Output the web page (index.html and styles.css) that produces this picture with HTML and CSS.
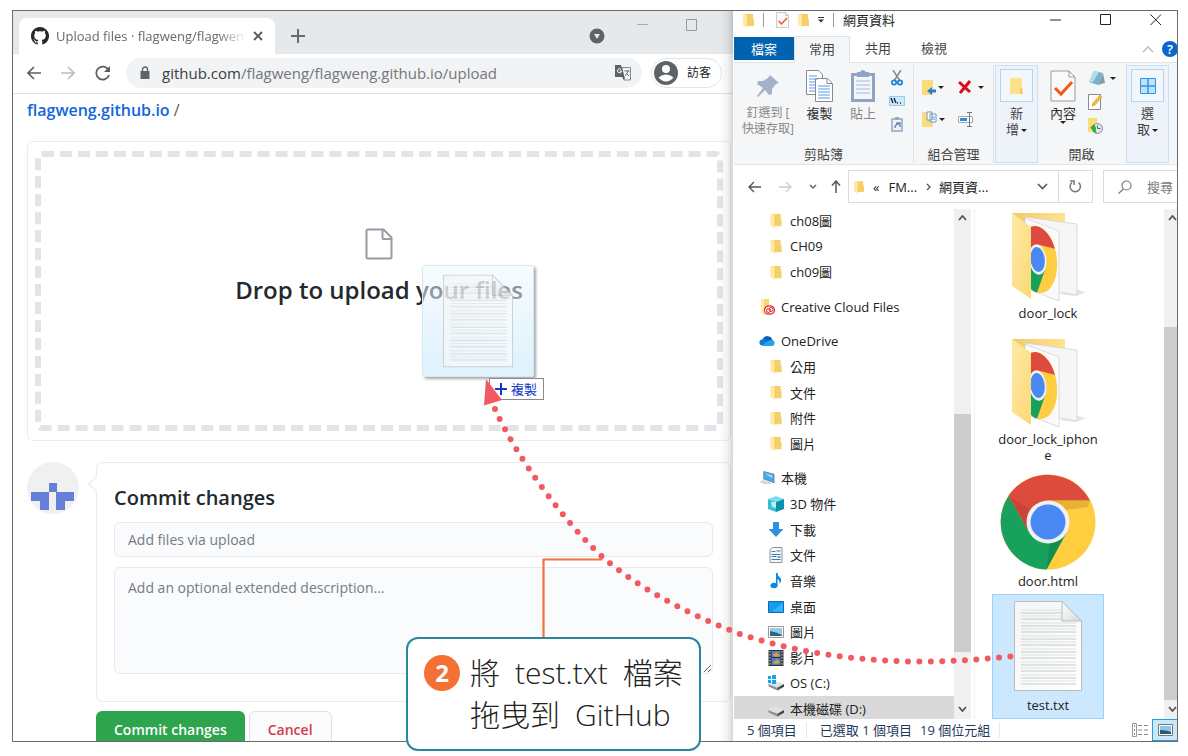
FILE: index.html
```html
<!DOCTYPE html>
<html lang="zh-Hant">
<head>
<meta charset="utf-8">
<title>Upload files · flagweng/flagweng.github.io</title>
<link rel="stylesheet" href="styles.css">
</head>
<body>
<svg class="defs" aria-hidden="true">
  <defs>
    <linearGradient id="gFold" x1="0" y1="0" x2="1" y2="1"><stop offset="0" stop-color="#ffe9a8"/><stop offset="1" stop-color="#fbd974"/></linearGradient>
    <linearGradient id="gBack" x1="0" y1="0" x2="1" y2="0"><stop offset="0" stop-color="#efcb6a"/><stop offset="1" stop-color="#ffe392"/></linearGradient>
    <linearGradient id="gPage" x1="0" y1="0" x2="1" y2="1"><stop offset="0" stop-color="#f3f5f6"/><stop offset="1" stop-color="#ffffff"/></linearGradient>
    <linearGradient id="gCurl" x1="0" y1="0" x2="1" y2="1"><stop offset="0" stop-color="#ffffff"/><stop offset="1" stop-color="#d5d9da"/></linearGradient>
    <clipPath id="halfChrome"><path d="M18 0H60V110L18 88Z"/></clipPath>
    <pattern id="rules" width="56" height="13" patternUnits="userSpaceOnUse" patternTransform="translate(0 8)"><path d="M0 1h56M0 7h56" stroke="#dfe1e2"/><path d="M0 4h56M0 10h56" stroke="#c6c9cb"/></pattern>
    <symbol id="folder" viewBox="0 0 12 16"><path d="M2 1h9v5l1 1v7H2z" fill="#f6cf68"/><path d="M0 1h2l3 2v12.500L4 15.500 0 13z" fill="#ffe9a3"/><path d="M5 3v11" stroke="#e8bf56" stroke-width=".6"/></symbol>
    <symbol id="chrome" viewBox="0 0 96 96">
      <circle cx="48" cy="48" r="47.500" fill="#ffcd40"/>
      <path d="M48 48 8.500 21.600A47.500 47.500 0 0 1 90 26.500H48z" fill="#dd4b3e"/>
      <path d="M8.500 22 29.400 58.800 48 48 48 26.500z" fill="#dd4b3e"/>
      <path d="M8.500 22A47.500 47.500 0 0 0 46.500 95.500L66.600 58.800 29.400 58.800z" fill="#18a05d"/>
      <path d="M8.500 22 29.400 58.800 31 36z" fill="#b83a31" opacity=".45"/>
      <path d="M48 26.500H90L88 33 66 36z" fill="#d9a12f" opacity=".6"/>
      <path d="M66 59 46.500 95.500 50 69z" fill="#0f7a45" opacity=".5"/>
      <circle cx="48" cy="48" r="21.500" fill="#f1f1f1"/><circle cx="48" cy="48" r="17.500" fill="#4a89f4"/>
    </symbol>
    <symbol id="bigfolder" viewBox="0 0 76 96">
      <path d="M60 82 76 86 66 90 50 88z" fill="#e4e4e4"/>
      <path d="M2 7h53v50H2z" fill="url(#gBack)"/>
      <path d="M15 11 67 18v71L15 80z" fill="#f6f6f6" stroke="#cfcfcf" stroke-width=".7"/>
      <path d="M15 12 49 25v70L15 82z" fill="#fafafa" stroke="#cfcfcf" stroke-width=".7"/>
      <g clip-path="url(#halfChrome)"><g transform="translate(8 15) skewY(14) scale(.41 .7)">
        <circle cx="48" cy="48" r="47.500" fill="#ffcd40"/>
        <path d="M48 48 8.500 21.600A47.500 47.500 0 0 1 90 26.500H48z" fill="#dd4b3e"/>
        <path d="M8.500 22A47.500 47.500 0 0 0 46.500 95.500L66.600 58.800 29.400 58.800z" fill="#18a05d"/>
        <circle cx="48" cy="48" r="21.500" fill="#f1f1f1"/><circle cx="48" cy="48" r="17.500" fill="#4a89f4"/>
      </g></g>
      <path d="M2 7 21 21v72L2 80z" fill="url(#gFold)"/>
    </symbol>
    <symbol id="document" viewBox="0 0 68 90">
      <path d="M.5.500H48L67.500 20V89.500H.5z" fill="url(#gPage)" stroke="#b9bdbf"/>
      <path d="M7 8h41v76H7zM48 21h14v63H48z" fill="url(#rules)"/>
      <path d="M48 .5V20H67.500z" fill="url(#gCurl)" stroke="#b9bdbf"/>
    </symbol>
    <symbol id="check" viewBox="0 0 26 32"><path d="M1 1h18l6 6v24H1z" fill="#fafafa" stroke="#9a9a9a"/><path d="M19 1v6h6" fill="none" stroke="#9a9a9a"/><path d="m5 18 6 6L22 12" fill="none" stroke="#f15a1d" stroke-width="3"/></symbol>
    <symbol id="drive" viewBox="0 0 17 16"><path d="M0 9 7 6l10 3-7 4z" fill="#dfe1e3"/><path d="M0 9l10 4v3L1 12z" fill="#8f9397"/><path d="M10 13l7-4v3l-7 4z" fill="#3f4346"/><path d="M12 13.500h1" stroke="#4ee04e"/></symbol>
  </defs>
</svg>

<main class="frame">
  <section class="browser">
    <div class="tabstrip">
      <div class="tab">
        <svg width="18" height="18" viewBox="0 0 16 16"><path fill="#24292e" d="M8 0C3.580 0 0 3.580 0 8c0 3.540 2.290 6.530 5.470 7.590.4.070.55-.17.55-.38 0-.19-.01-.82-.01-1.490-2.010.37-2.530-.49-2.690-.94-.09-.23-.48-.94-.82-1.130-.28-.15-.68-.52-.01-.53.630-.01 1.080.58 1.230.82.720 1.210 1.870.87 2.330.66.070-.52.280-.87.510-1.070-1.780-.2-3.640-.89-3.640-3.950 0-.87.310-1.590.820-2.150-.08-.2-.36-1.020.08-2.120 0 0 .67-.21 2.200.82.640-.18 1.320-.27 2-.27s1.360.09 2 .27c1.530-1.040 2.200-.82 2.200-.82.440 1.100.160 1.920.08 2.120.510.56.820 1.270.820 2.150 0 3.070-1.870 3.750-3.650 3.950.290.250.540.730.540 1.480 0 1.070-.01 1.930-.01 2.200 0 .21.150.46.550.38A8 8 0 0 0 8 0"/></svg>
        <span class="tab-title">Upload files · flagweng/flagwen</span>
        <button class="bare" aria-label="Close tab"><svg width="10" height="10" viewBox="0 0 10 10"><path d="m1 1 8 8M9 1 1 9" stroke="#55585c" stroke-width="1.800"/></svg></button>
      </div>
      <button class="bare newtab" aria-label="New tab"><svg width="14" height="14" viewBox="0 0 14 14"><path d="M7 0v14M0 7h14" stroke="#66696d" stroke-width="2"/></svg></button>
      <span class="grow"></span>
      <button class="bare tabsearch" aria-label="Search tabs"><svg width="16" height="16" viewBox="0 0 16 16"><circle cx="8" cy="8" r="7.500" fill="#5f6368"/><path d="M5 6h6l-3 5z" fill="#e6e9ec"/></svg></button>
      <div class="wincontrols">
        <svg width="12" height="12" viewBox="0 0 12 12"><path d="M0 5.500h11" stroke="#aaadb0"/></svg>
        <svg width="12" height="12" viewBox="0 0 12 12"><path d="M.5.500h10v11H.5z" fill="none" stroke="#97999c"/></svg>
      </div>
    </div>
    <div class="toolbar">
      <button class="bare" aria-label="Back"><svg width="14" height="14" viewBox="0 0 14 14"><path d="M14 7H1M7 1 1 7l6 6" fill="none" stroke="#5b5e63" stroke-width="1.600"/></svg></button>
      <button class="bare" aria-label="Forward"><svg width="14" height="14" viewBox="0 0 14 14"><path d="M0 7h13M7 1l6 6-6 6" fill="none" stroke="#bbbdc0" stroke-width="1.600"/></svg></button>
      <button class="bare" aria-label="Reload"><svg width="16" height="16" viewBox="0 0 16 16"><path d="M13.500 5A6.500 6.500 0 1 0 14 10" fill="none" stroke="#5b5e63" stroke-width="1.800"/><path d="M15 1v6H9z" fill="#5b5e63"/></svg></button>
      <div class="urlbar">
        <svg width="10" height="13" viewBox="0 0 10 13"><path d="M.5 5h9v8h-9z" fill="#5f6368"/><path d="M2.500 5V3.500a2.500 2.500 0 0 1 5 0V5" fill="none" stroke="#5f6368" stroke-width="1.400"/></svg>
        <span class="url"><b>github.com</b>/flagweng/flagweng.github.io/upload</span>
        <svg width="16" height="16" viewBox="0 0 16 16"><path d="M7 2.500h8.500v12.500H9z" fill="#f1f3f4" stroke="#85888c"/><path d="M0 0h6l3.500 12H0z" fill="#5f6368"/><path d="M7 12h3l-1 3z" fill="#5f6368"/><path d="M6 4.500A2 2 0 1 0 6.500 6H4.500" fill="none" stroke="#fff"/><path d="M9.500 6h5M12 5v1m1.500 0L10 11m1-3 3 3" fill="none" stroke="#75787c"/></svg>
      </div>
      <button class="profile"><svg width="24" height="24" viewBox="0 0 24 24"><circle cx="12" cy="12" r="12" fill="#5f6368"/><circle cx="12" cy="8" r="4" fill="#fff"/><path d="M4.500 16.500Q8 13.500 12 13.500t7.500 3Q16 20.500 12 20.500t-7.500-4z" fill="#fff"/></svg>訪客</button>
    </div>
    <div class="page">
      <nav class="crumbs"><a href="#">flagweng.github.io</a> /</nav>
      <div class="dropcard">
        <div class="dropzone">
          <svg width="28" height="32" viewBox="0 0 28 32"><path d="M3 1.500h15.500l8 8V29q0 1.500-1.500 1.500H3q-1.500 0-1.500-1.500V3q0-1.500 1.500-1.500zM17.500 2v8q0 1 1 1h8" fill="none" stroke="#959da5" stroke-width="2"/></svg>
          <h1>Drop to upload your files</h1>
        </div>
      </div>
      <form class="commit">
        <svg class="avatar" width="52" height="52" viewBox="0 0 52 52"><circle cx="26" cy="26" r="26" fill="#f0f0f0"/><path d="M22 21h8v9h17v9h-9v9h-9V30h-7v18h-9v-9H4v-9h18z" fill="#6680d9"/></svg>
        <div class="commit-main">
          <div class="commit-box">
            <svg class="pointer" width="9" height="16" viewBox="0 0 9 16"><path d="M9 0 1 8l8 8" fill="#fff" stroke="#eaecef" stroke-width="1.400"/></svg>
            <h2>Commit changes</h2>
            <input type="text" aria-label="Commit summary" placeholder="Add files via upload">
            <textarea aria-label="Extended description" placeholder="Add an optional extended description..."></textarea>
          </div>
          <div class="actions">
            <button type="button" class="primary">Commit changes</button>
            <button type="button" class="cancel">Cancel</button>
          </div>
        </div>
      </form>
    </div>
  </section>

  <section class="explorer">
    <header class="titlebar">
      <svg width="11" height="15"><use href="#folder"/></svg>
      <i class="bar"></i>
      <svg class="push" width="13" height="16"><use href="#check"/></svg>
      <svg width="11" height="15"><use href="#folder"/></svg>
      <svg width="6" height="6" viewBox="0 0 6 6"><path d="M0 .5h6" stroke="#333"/><path d="M0 2.500h6l-3 3z" fill="#333"/></svg>
      <i class="bar"></i>
      <span class="grow">網頁資料</span>
      <span class="caption">
        <svg width="12" height="12" viewBox="0 0 12 12"><path d="M0 6h11" stroke="#222"/></svg>
        <svg width="12" height="12" viewBox="0 0 12 12"><path d="M.5.500h10v10H.5z" fill="none" stroke="#222"/></svg>
        <svg width="12" height="12" viewBox="0 0 12 12"><path d="m.5.500 10.500 10.500M11 .5.500 11" stroke="#222"/></svg>
      </span>
    </header>
    <nav class="tabs">
      <button class="file">檔案</button><button class="active">常用</button><button>共用</button><button>檢視</button>
      <span class="grow"></span>
      <svg width="12" height="7" viewBox="0 0 12 7"><path d="m1 6 5-5 5 5" fill="none" stroke="#b5b5b5" stroke-width="1.400"/></svg>
      <span class="help">?</span>
    </nav>
    <div class="ribbon">
      <div class="group clip">
        <div class="tools">
          <div class="big dim pin"><svg width="24" height="32" viewBox="0 0 24 32"><path d="m14 5 9 8-3 1-4 5 0 5-3 1-4-5-7 7-1-1 6-8-6-4 1-3 5 0 5-3z" fill="#a3b2c8"/></svg><span>釘選到 [<br>快速存取]</span></div>
          <div class="big"><svg width="27" height="32" viewBox="0 0 27 32"><g fill="#fff" stroke="#8b8b8b"><path d="M.5.500h12l4 4v20H.5z"/><path d="M9.500 8.500h12l5 5v18h-17z"/><path d="M21 8.500v5h5"/></g><path d="M3 6h8M3 9h9M3 12h6M3 15h6M3 18h6M3 21h6M12 16h12M12 19h12M12 22h12M12 25h12M12 28h12" stroke="#5b9bea"/></svg><span>複製</span></div>
          <div class="big dim"><svg width="24" height="32" viewBox="0 0 24 32"><path d="M1.500 4.500h21v26h-21z" fill="#f2f6fb" stroke="#8fa3c2" stroke-width="3"/><path d="M6 2h3q3-4 6 0h3v5H6z" fill="#8fa3c2"/><path d="M5 11h14M5 15h14M5 19h14M5 23h14" stroke="#cbd8ea" stroke-width="2"/></svg><span>貼上</span></div>
          <div class="stack">
            <svg width="12" height="16" viewBox="0 0 12 16"><path d="M2 0 9 11M10 0 3 11" stroke="#888" stroke-width="1.500"/><circle cx="3" cy="12.500" r="2.200" fill="none" stroke="#1683d8" stroke-width="1.700"/><circle cx="9" cy="12.500" r="2.200" fill="none" stroke="#1683d8" stroke-width="1.700"/></svg>
            <svg width="16" height="10" viewBox="0 0 16 10"><path d="M.5.500h15v9H.5z" fill="#cfe9fb" stroke="#92cdf4"/><path d="m2 2 2 5M5 2l2 5M8 7h1M11 7h1" stroke="#223" stroke-width="1.400"/></svg>
            <svg width="12" height="16" viewBox="0 0 12 16"><path d="M1 3h10v12H1z" fill="#eef3f9" stroke="#94a7c4" stroke-width="1.500"/><path d="M4 1h4v3H4z" fill="#94a7c4"/><path d="M4 12q0-4 4-4M5 7h4v4" fill="none" stroke="#7389ad" stroke-width="1.500"/></svg>
          </div>
        </div>
        <div class="gname">剪貼簿</div>
      </div>
      <div class="group org">
        <div class="quad">
          <span><svg width="14" height="17" viewBox="0 0 14 17"><path d="M0 1h11v15H0z" fill="#fbdc7c"/><path d="m5 12 5-4v2.500h4v3h-4V16z" fill="#1f83d6"/></svg><i class="dd"></i></span>
          <span><svg width="14" height="14" viewBox="0 0 14 14"><path d="m1 2 11 10M12 1 2 13" stroke="#dc0a1c" stroke-width="3"/></svg><i class="dd"></i></span>
          <span><svg width="15" height="17" viewBox="0 0 15 17"><path d="M0 1h11v15H0z" fill="#fbdc7c"/><path d="M5 1h5v8H5zM8 3h6v8H8z" fill="#fff" stroke="#7b94b8"/><path d="M10 6h3M10 8h3" stroke="#5b9bea"/></svg><i class="dd"></i></span>
          <span><svg width="15" height="15" viewBox="0 0 15 15"><path d="M.5 4.500h14v6H.5z" fill="#fff" stroke="#aaa"/><path d="M2 6h7v3H2z" fill="#2a8ce8"/><path d="M9 .5h5M11.500.500v14M9 14.500h5" stroke="#777"/></svg></span>
        </div>
        <div class="gname">組合管理</div>
      </div>
      <button class="group tall"><i class="tile"><svg width="13" height="16" viewBox="0 0 13 16"><path d="M0 0h12v11l1 1v4H0z" fill="#fde08a"/><path d="M10 10h2v6h-2z" fill="#f3c95e"/></svg></i><span>新<br>增<i class="dd"></i></span></button>
      <div class="group open">
        <div class="tools">
          <div class="big"><svg width="26" height="32"><use href="#check"/></svg><span>內容</span><i class="dd"></i></div>
          <div class="stack">
            <span><svg width="18" height="16" viewBox="0 0 18 16"><path d="m6 1 9 2-5 12-9-3z" fill="#6fb6cf"/><path d="m6 1 5 1-6 10-4 0z" fill="#b5dbe8"/><path d="m15 3 2 10-4 1-3 1z" fill="#8c9ba2"/></svg><i class="dd"></i></span>
            <svg width="15" height="16" viewBox="0 0 15 16"><path d="M.5.500h12v15H.5z" fill="#fff" stroke="#888"/><path d="m4 12 1-3 7-8 2 2-7 8z" fill="#f3b941" stroke="#c98a1e" stroke-width=".5"/></svg>
            <svg width="15" height="16" viewBox="0 0 15 16"><path d="M0 0h9v14H0z" fill="#fbdc7c"/><circle cx="9.500" cy="10.500" r="5" fill="#dfe6e6" stroke="#849090"/><path d="M9.500 7.500v3h3" fill="none" stroke="#666"/><path d="m2 10 4-4 2 4q-1 3 1 5-4 0-5-4z" fill="#2dae43"/></svg>
          </div>
        </div>
        <div class="gname">開啟</div>
      </div>
      <button class="group tall"><i class="tile"><svg width="16" height="16" viewBox="0 0 16 16"><path d="M.5.500h15v15H.5z" fill="#bfe1fb" stroke="#2f97ea"/><path d="M8 0v16M0 8h16" stroke="#2f97ea" stroke-width="1.500"/></svg></i><span>選<br>取<i class="dd"></i></span></button>
    </div>
    <div class="address">
      <svg width="13" height="12" viewBox="0 0 13 12"><path d="M13 6H1M6 1 1 6l5 5" fill="none" stroke="#555" stroke-width="1.400"/></svg>
      <svg width="13" height="12" viewBox="0 0 13 12"><path d="M0 6h12M7 1l5 5-5 5" fill="none" stroke="#ccc" stroke-width="1.400"/></svg>
      <svg width="8" height="6" viewBox="0 0 8 6"><path d="m1 1 3 3 3-3" fill="none" stroke="#666" stroke-width="1.500"/></svg>
      <svg width="10" height="13" viewBox="0 0 10 13"><path d="M5 13V1M1 5.500 5 1l4 4.500" fill="none" stroke="#555" stroke-width="1.500"/></svg>
      <div class="path">
        <svg width="10" height="14"><use href="#folder"/></svg>
        <span class="chev">«</span><span>FM...</span>
        <svg width="6" height="8" viewBox="0 0 6 8"><path d="m1 1 3 3-3 3" fill="none" stroke="#555" stroke-width="1.300"/></svg>
        <span class="grow">網頁資...</span>
        <svg width="11" height="7" viewBox="0 0 11 7"><path d="m1 1 4.500 4.500L10 1" fill="none" stroke="#555" stroke-width="1.600"/></svg>
        <i class="refresh"><svg width="13" height="13" viewBox="0 0 13 13"><path d="M9.500 2.500A5.200 5.200 0 1 1 3 2.500" fill="none" stroke="#777" stroke-width="1.500"/><path d="M1 1h4v4" fill="none" stroke="#777" stroke-width="1.500"/></svg></i>
      </div>
      <label class="search"><svg width="14" height="14" viewBox="0 0 14 14"><circle cx="8.500" cy="5.500" r="4.500" fill="none" stroke="#777" stroke-width="1.200"/><path d="M5.500 9 .5 13.500" stroke="#777" stroke-width="1.200"/></svg><input type="text" aria-label="搜尋" placeholder="搜尋 網頁資料"></label>
    </div>
    <div class="panes">
      <ul class="tree">
        <li><svg width="11" height="15"><use href="#folder"/></svg>ch08圖</li>
        <li><svg width="11" height="15"><use href="#folder"/></svg>CH09</li>
        <li><svg width="11" height="15"><use href="#folder"/></svg>ch09圖</li>
        <li class="root"><svg width="16" height="16" viewBox="0 0 16 16"><path d="M3 0h7v15l-4 1-3-2z" fill="#f8d577"/><path d="M2 0h3v15l-3-1z" fill="#ffe9a3"/><ellipse cx="10.500" cy="11" rx="5" ry="4.200" fill="#fff" stroke="#e3262d" stroke-width="1.200"/><circle cx="9.500" cy="11.500" r="2" fill="none" stroke="#e3262d"/><circle cx="12" cy="10.500" r="2" fill="none" stroke="#e3262d"/></svg>Creative Cloud Files</li>
        <li class="root"><svg width="18" height="12" viewBox="0 0 18 12"><path d="M4 4Q7-1 11 1q3 0 4 4l-8 4z" fill="#0a5fb5"/><path d="M1 10q-2-5 3-6 3-1 5 2l4 5H4q-2 0-3-1z" fill="#0f78d4"/><path d="M3 11 11 5.500q2-1 4-.5 3 1 2.500 4-.5 2.500-3 2.500H4z" fill="#28a2ea"/></svg>OneDrive</li>
        <li><svg width="11" height="15"><use href="#folder"/></svg>公用</li>
        <li><svg width="11" height="15"><use href="#folder"/></svg>文件</li>
        <li><svg width="11" height="15"><use href="#folder"/></svg>附件</li>
        <li><svg width="11" height="15"><use href="#folder"/></svg>圖片</li>
        <li class="root"><svg width="17" height="15" viewBox="0 0 17 15"><path d="M5 0 16 3v9L5 8z" fill="#4aa9ea" stroke="#4d6f8a" stroke-width=".7"/><path d="m6 2 8 2v3z" fill="#a8dbfb"/><path d="m0 11 5-2 6 3-4 2z" fill="#d2d6da"/><path d="m10 12 2 1" stroke="#888"/></svg>本機</li>
        <li><svg width="16" height="16" viewBox="0 0 16 16"><path d="m0 3 8-3 8 3-8 3z" fill="#83dde8"/><path d="m0 3 8 3v10l-8-3z" fill="#35bdd4"/><path d="m16 3-8 3v10l8-3z" fill="#0a93ae"/><path d="m3 6 5 0v6l-4-1z" fill="#b8eef4"/></svg>3D 物件</li>
        <li><svg width="15" height="15" viewBox="0 0 15 15"><path d="M4.500 0h6v7H15l-7.500 8L0 7h4.500z" fill="#2f8fe2"/></svg>下載</li>
        <li><svg width="13" height="16" viewBox="0 0 13 16"><path d="M.5 2.500 3 .5h9.500v15H.5z" fill="#f5f7f8" stroke="#8d9499"/><path d="M2 4.500h4M2 7.500h9M2 9.500h5M2 12.500h9M7 4h4" stroke="#3c7fa8"/><path d="M8 9h3v2H8z" fill="#68aad4"/></svg>文件</li>
        <li><svg width="11" height="16" viewBox="0 0 11 16"><ellipse cx="3.500" cy="12.500" rx="3.500" ry="2.700" fill="#0c86de"/><path d="M5.500 0H7q0 3 3 5 1.500 3-1 6 .5-4-2-5v7H5.500z" fill="#0c86de"/></svg>音樂</li>
        <li><svg width="16" height="12" viewBox="0 0 16 12"><path d="M.5.500h15v11H.5z" fill="#149bf2" stroke="#0a6cb4"/><path d="M15 2v8.500H4z" fill="#36b2fb"/></svg>桌面</li>
        <li><svg width="16" height="12" viewBox="0 0 16 12"><path d="M.5.500h15v11H.5z" fill="#fff" stroke="#999"/><path d="M2 2h12v8H2z" fill="#96c8ee"/><path d="M2 5q6 1 12 4v1H2z" fill="#2a6674"/></svg>圖片</li>
        <li><svg width="15" height="16" viewBox="0 0 15 16"><path d="M0 0h15v16H0z" fill="#333"/><path d="M3 1h9v6H3zM3 8h9v7H3z" fill="#4280cf"/><path d="m4 5 4-3 4 4-5 1zM4 13l5-4 3 4-5 1z" fill="#e29a34"/><path d="M1.500 1v14M13.500 1v14" stroke="#ddd" stroke-dasharray="1.500 1.500"/></svg>影片</li>
        <li><svg width="17" height="16"><use href="#drive"/><path d="M0 1h3v3H0zM4 0h4v4H4zM0 5h3v3H0zM4 5h4v4H4z" fill="#10a7ec"/></svg>OS (C:)</li>
        <li class="current"><svg width="17" height="16"><use href="#drive"/></svg>本機磁碟 (D:)</li>
      </ul>
      <div class="scroll treebar"><svg width="9" height="6" viewBox="0 0 9 6"><path d="m1 5 3.500-4L8 5" fill="none" stroke="#555" stroke-width="1.800"/></svg><div class="rail"><i></i></div><svg width="9" height="6" viewBox="0 0 9 6"><path d="m1 1 3.500 4L8 1" fill="none" stroke="#555" stroke-width="1.800"/></svg></div>
      <div class="files">
        <figure><svg width="76" height="96"><use href="#bigfolder"/></svg><figcaption>door_lock</figcaption></figure>
        <figure><svg width="76" height="96"><use href="#bigfolder"/></svg><figcaption>door_lock_iphon<br>e</figcaption></figure>
        <figure><svg width="96" height="96"><use href="#chrome"/></svg><figcaption>door.html</figcaption></figure>
        <figure class="selected"><svg width="96" height="96" viewBox="-14 -3 96 96"><use href="#document" width="68" height="90"/></svg><figcaption>test.txt</figcaption></figure>
      </div>
      <div class="scroll filebar"><svg width="9" height="6" viewBox="0 0 9 6"><path d="m1 5 3.500-4L8 5" fill="none" stroke="#555" stroke-width="1.800"/></svg><div class="rail"><i></i></div><svg width="9" height="6" viewBox="0 0 9 6"><path d="m1 1 3.500 4L8 1" fill="none" stroke="#555" stroke-width="1.800"/></svg></div>
    </div>
    <footer class="status">
      <span class="cell">5 個項目</span><span class="cell"><span>已選取 1 個項目</span><span>19 個位元組</span></span>
      <span class="grow"></span>
      <svg width="17" height="14" viewBox="0 0 17 14"><path d="M.5.500h4v13h-4z" fill="#fff" stroke="#999"/><path d="M2 3h1M2 7h1" stroke="#3a8a5a" stroke-width="1.500"/><path d="M2 11h1" stroke="#d33" stroke-width="1.500"/><path d="M6 2.500h4M12 2.500h4M6 7h4M12 7h4M6 11.500h4M12 11.500h4" stroke="#888"/></svg>
      <button class="thumbs" aria-label="大圖示"><svg width="15" height="12" viewBox="0 0 15 12"><path d="M.5.500h14v11H.5z" fill="#fff" stroke="#777"/><path d="M2 2h11v8H2z" fill="#8fc4f2"/><path d="M2 6q6 0 11 2v2H2z" fill="#235d6e"/></svg></button>
    </footer>
  </section>
</main>

<div class="ghost"><svg width="70" height="94"><use href="#document"/></svg></div>
<div class="droptip"><svg width="12" height="12" viewBox="0 0 12 12"><path d="M6 0v12M0 6h12" stroke="#1237c8" stroke-width="2"/></svg>複製</div>
<svg class="trail" viewBox="0 0 1188 756" preserveAspectRatio="none" aria-hidden="true">
  <path d="M602.500 559.500H543.500V640" fill="none" stroke="#f4733a" stroke-width="2.200"/>
  <path d="M495 409C515 455 565 523 601.500 556C637 588 692 616 740 634C798 653 860 661.500 920 661.500C952 661.500 983 659.500 1014 656" fill="none" stroke="#f15a5f" stroke-width="6" stroke-linecap="round" stroke-dasharray="0 11.400"/>
  <path d="M486 379 502 400 484 405.500z" fill="#f15a5f"/>
</svg>
<aside class="callout"><span class="step">2</span><p>將&ensp;test.txt&ensp;檔案<br>拖曳到&ensp;GitHub</p></aside>
</body>
</html>
```
FILE: styles.css
```css
* { box-sizing: border-box; }
body {
  margin: 0;
  height: 100vh;
  display: flex;
  padding: 10px 10px 14px 12px;
  position: relative;
  overflow: hidden;
  background: #fff;
  color: #222;
  font: 13px/16px "Open Sans", "Noto Sans CJK TC", sans-serif;
}
button, input, textarea { font: inherit; color: inherit; margin: 0; }
button { border: 0; padding: 0; background: none; }
svg { display: block; flex: none; }
i { font-style: normal; }
h1, h2, p, ul, figure { margin: 0; padding: 0; }
.defs { position: absolute; width: 0; height: 0; }
.grow { flex: 1; min-width: 0; white-space: nowrap; }
.frame {
  flex: 1;
  min-width: 0;
  display: grid;
  grid-template-columns: minmax(0, 60fr) minmax(0, 37fr);
  grid-template-rows: minmax(0, 1fr);
  border: 1px solid #6b6b6d;
  overflow: hidden;
}

/* Browser window */
.browser { display: flex; flex-direction: column; position: relative; overflow: hidden; }
.browser::after {
  content: "";
  position: absolute;
  inset: 0 0 0 auto;
  width: 14px;
  background: linear-gradient(90deg, rgba(0,0,0,0), rgba(0,0,0,.05) 60%, rgba(0,0,0,.16));
}
.tabstrip { flex: none; height: 43px; display: flex; padding: 7px 35px 0 6px; background: #e6e9ec; }
.tab {
  width: 256px;
  display: flex;
  align-items: center;
  gap: 7px;
  padding: 0 12px 0 12px;
  background: #fff;
  border-radius: 8px 8px 0 0;
}
.tab-title {
  flex: 1;
  min-width: 0;
  white-space: nowrap;
  color: #66696d;
  -webkit-mask-image: linear-gradient(90deg, #000 85%, transparent);
  mask-image: linear-gradient(90deg, #000 85%, transparent);
}
.newtab { padding: 0 16px; }
.tabsearch { padding-right: 32px; }
.wincontrols { display: flex; gap: 37px; height: 14px; align-items: center; }
.toolbar {
  flex: none;
  height: 40px;
  display: flex;
  align-items: center;
  gap: 20px;
  padding: 0 11px 2px 14px;
  border-bottom: 1px solid #dfe1e3;
}
.urlbar {
  flex: 1;
  height: 30px;
  margin-left: -5px;
  margin-right: -11px;
  display: flex;
  align-items: center;
  gap: 12px;
  padding: 0 11px 0 14px;
  border-radius: 15px;
  background: #f1f3f4;
}
.url { flex: 1; font-size: 15px; line-height: 20px; color: #74777b; }
.url b { font-weight: 400; color: #3a3d41; }
.profile {
  height: 30px;
  display: flex;
  align-items: center;
  gap: 9px;
  padding: 0 10px 0 2px;
  border: 1px solid #e2e4e6;
  border-radius: 15px;
  font-size: 12px;
}
.page { flex: 1; min-height: 0; padding: 6px 2px 0 14px; }
.crumbs { font-size: 16px; line-height: 20px; color: #586069; }
.crumbs a { color: #1166dc; font-weight: 600; text-decoration: none; }
.dropcard { margin-top: 21px; padding: 9px 7px; border: 1px solid #eaecef; border-radius: 6px; }
.dropzone {
  height: 280px;
  display: flex;
  flex-direction: column;
  align-items: center;
  gap: 14px;
  padding-top: 71px;
  border: 6px dashed #e1e4e8;
  border-radius: 7px;
}
.dropzone h1 { font-size: 24px; line-height: 32px; font-weight: 600; color: #24292e; }
.commit { display: flex; gap: 17px; margin-top: 21px; }
.commit-main { flex: 1; min-width: 0; }
.commit-box {
  position: relative;
  display: flex;
  flex-direction: column;
  padding: 20px 17px 27px;
  border: 1px solid #eaecef;
  border-radius: 6px;
}
.pointer { position: absolute; left: -9px; top: 13px; }
.commit-box h2 { font-size: 20px; line-height: 30px; font-weight: 600; color: #24292e; }
.commit-box input, .commit-box textarea {
  width: 100%;
  border: 1px solid #e6e9ec;
  border-radius: 6px;
  background: #fafbfc;
  padding: 0 13px;
  font-size: 14px;
  line-height: 20px;
}
.commit-box input { height: 35px; margin: 9px 0 10px; }
.commit-box textarea { height: 107px; padding: 10px 13px; }
.commit-box ::placeholder { color: #757c84; opacity: 1; }
.actions { display: flex; gap: 4px; margin-top: 9px; }
.actions button { height: 37px; padding: 0 18px; border-radius: 6px; font-size: 14px; font-weight: 600; }
.actions .primary { background: #2ea44f; color: #fff; }
.actions .cancel { background: #fafbfc; border: 1px solid #dfe1e4; color: #d73a49; }

/* File explorer window */
.explorer { display: flex; flex-direction: column; padding-left: 1px; overflow: hidden; background: #fff; }
.titlebar { flex: none; height: 25px; display: flex; align-items: center; gap: 9px; padding: 0 15px 7px 9px; }
.titlebar .push { margin-left: 3px; }
.bar { width: 1px; height: 14px; background: #999; }
.caption { display: flex; gap: 38px; }
.tabs { flex: none; height: 27px; display: flex; align-items: center; border-bottom: 1px solid #e3e4e6; color: #444; }
.tabs button { align-self: stretch; padding: 0 14px 2px; }
.tabs button:nth-child(3), .tabs button:nth-child(4) { padding: 0 15px 2px; }
.tabs .file { padding: 0 17px; margin: 1px 0 2px 0; background: #0063b1; color: #fff; }
.tabs .active { background: #f5f6f7; border: 1px solid #dfe1e4; border-bottom: 0; margin-bottom: -1px; }
.help {
  width: 16px; height: 16px; margin: 0 -1px 0 8px;
  border-radius: 8px; background: #0a66c8; color: #fff; text-align: center; font-weight: 600;
}
.ribbon {
  flex: none;
  height: 102px;
  display: flex;
  padding: 2px 0 1px;
  background: #f5f6f7;
  border-bottom: 1px solid #e3e4e6;
}
.group { flex: none; display: flex; flex-direction: column; color: #444; }
.gname { margin-top: auto; line-height: 18px; text-align: center; }
.tools { display: flex; }
.big { display: flex; flex-direction: column; align-items: center; gap: 3px; padding-top: 5px; text-align: center; color: #333; white-space: nowrap; }
.big.dim { color: #888; }
.clip { width: 180px; border-right: 1px solid #e1e3e5; }
.clip .tools { padding-left: 8px; gap: 17px; }
.clip .pin { margin-right: -5px; font-size: 12px; }
.stack { display: flex; flex-direction: column; align-items: flex-start; gap: 8px; padding-top: 5px; }
.clip .stack { align-items: center; gap: 10px; margin-left: -4px; }
.org { width: 80px; border-right: 1px solid #e1e3e5; }
.quad { display: grid; grid-template-columns: 36px 36px; grid-auto-rows: 32px; padding: 6px 0 0 8px; }
.quad span, .stack span { display: flex; align-items: center; gap: 4px; }
.quad span:nth-child(odd) { gap: 0; }
.dd { display: inline-block; border: 3px solid transparent; border-top-color: #222; border-bottom: 0; margin-left: 2px; vertical-align: middle; }
.stack .dd { margin: 0; }
.big .dd { margin: -3px 0 0; }
.tall {
  width: 43px;
  margin: 0 0 0 1px;
  align-items: center;
  gap: 3px;
  padding-top: 3px;
  background: #edf3f9;
  border: 1px solid #c9e0f5;
  text-align: center;
}
.tile { width: 33px; height: 33px; display: grid; place-items: center; border: 1px solid #b0d5f5; background: #f2f7fc; }
.open { width: 87px; }
.open .tools { padding-left: 12px; gap: 12px; }
.address { flex: none; height: 44px; display: flex; align-items: center; padding: 0 0 1px 14px; gap: 18px; }
.address > svg:nth-child(3) { margin: 0 -4px 0 -1px; }
.path {
  flex: none;
  width: 245px;
  height: 33px;
  margin-left: -11px;
  display: flex;
  align-items: center;
  gap: 9px;
  padding-left: 5px;
  border: 1px solid #dcdcdc;
}
.path .grow { margin-left: -2px; }
.refresh { width: 34px; align-self: stretch; display: grid; place-items: center; border-left: 1px solid #dcdcdc; margin-left: 1px; }
.search { flex: 1; min-width: 0; height: 33px; margin-left: -8px; display: flex; align-items: center; gap: 15px; padding-left: 14px; border: 1px solid #dcdcdc; border-right: 0; }
.search input { flex: 1; min-width: 0; width: 0; border: 0; padding: 0; background: none; }
.search ::placeholder { color: #777; opacity: 1; }
.panes { flex: 1; min-height: 0; display: flex; overflow: hidden; }
.tree { flex: 1; min-width: 0; list-style: none; display: flex; flex-direction: column; margin: -1px 0 -3px; }
.tree li { flex: 1; min-height: 0; display: flex; align-items: center; gap: 6px; padding-left: 34px; white-space: nowrap; }
.tree li svg { width: 16px; }
.tree .root { margin-top: 9px; padding-left: 25px; }
.tree .current { background: #d9d9d9; }
.scroll { flex: none; width: 17px; display: flex; flex-direction: column; align-items: center; background: #f0f0f0; padding: 6px 0 7px; gap: 6px; }
.rail { flex: 1; align-self: stretch; display: flex; }
.rail i { flex: 1; background: #cdcdcd; }
.treebar .rail { padding: 187px 0 48px; }
.filebar .rail { padding: 100px 0 0; }
.files { flex: none; width: 193px; display: flex; flex-direction: column; align-items: flex-start; padding-left: 18px; margin-top: -8px; border-left: 3px solid #fff; box-shadow: inset 1px 0 #f1f1f1; }
.filebar { margin-right: -4px; }
figure { flex: none; width: 112px; display: flex; flex-direction: column; align-items: center; gap: 3px; padding: 5px 0 6px; text-align: center; }
figure.selected { padding: 3px 0 5px; margin-top: -1px; background: #cce8ff; border: 1px solid #99d1ff; }
.status { flex: none; height: 22px; display: flex; align-items: center; color: #1e395b; white-space: nowrap; }
.cell { display: flex; gap: 8px; padding: 0 9px 0 13px; border-right: 1px solid #e8e8e8; }
.thumbs { width: 25px; height: 22px; margin-left: 3px; display: grid; place-items: center; background: #cbe8f6; border: 1px solid #26a0da; border-right: 0; }

/* Dragged file and annotation */
.ghost {
  position: absolute;
  left: 422px; top: 265px;
  width: 112px; height: 112px;
  display: grid;
  place-items: center;
  border-radius: 3px;
  border: 1px solid #d3e9f5;
  background: linear-gradient(rgba(236,247,254,.4), rgba(222,241,252,.94) 90%);
  box-shadow: 2px 2px 3px rgba(0,0,0,.35);
}
.ghost svg { opacity: .6; }
.droptip {
  position: absolute;
  left: 489px; top: 378px;
  display: flex;
  align-items: center;
  gap: 4px;
  padding: 2px 6px 2px 5px;
  background: #fff;
  border: 1px solid #8a8a8a;
  color: #1237c8;
}
.trail { position: absolute; inset: 0; width: 100%; height: 100%; pointer-events: none; }
.callout {
  position: absolute;
  left: 406px; top: 637px;
  display: flex;
  gap: 10px;
  padding: 13px 16px;
  border: 2px solid #2a859d;
  border-radius: 12px;
  background: #fff;
  font: 300 30px/42px "Open Sans", "Noto Sans CJK TC", sans-serif;
  white-space: nowrap;
}
.step {
  flex: none;
  width: 36px; height: 36px;
  margin-top: 3px;
  border-radius: 18px;
  background: #f47035;
  color: #fff;
  text-align: center;
  font-size: 24px;
  line-height: 36px;
  font-weight: 700;
}
```
